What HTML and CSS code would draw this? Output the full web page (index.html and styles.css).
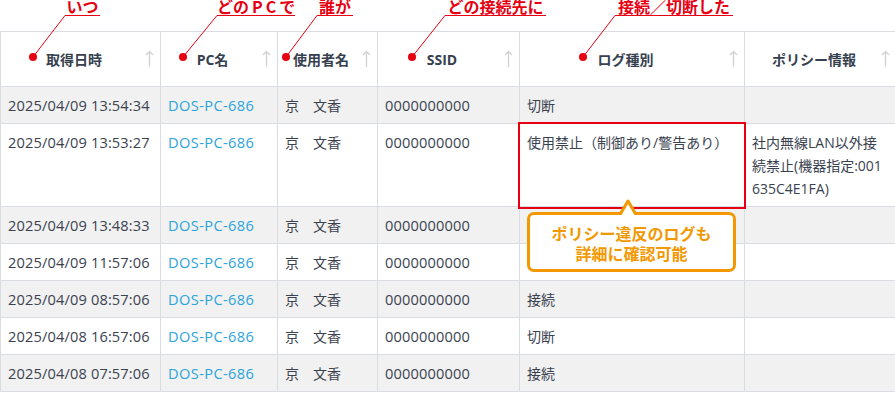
FILE: index.html
```html
<!DOCTYPE html>
<html lang="ja">
<head>
<meta charset="utf-8">
<title>ログ一覧</title>
<link rel="stylesheet" href="styles.css">
</head>
<body>
<div class="page">
  <table class="log">
    <colgroup>
      <col class="c1"><col class="c2"><col class="c3"><col class="c4"><col class="c5"><col class="c6">
    </colgroup>
    <thead>
      <tr>
        <th><div class="th-in"><span class="th-label">取得日時</span><svg class="sort" viewBox="0 0 9 18"><path d="M4.5 17V1.5M1 5L4.5 1.5 8 5"/></svg></div></th>
        <th><div class="th-in"><span class="th-label">PC名</span><svg class="sort" viewBox="0 0 9 18"><path d="M4.5 17V1.5M1 5L4.5 1.5 8 5"/></svg></div></th>
        <th><div class="th-in"><span class="th-label">使用者名</span><svg class="sort" viewBox="0 0 9 18"><path d="M4.5 17V1.5M1 5L4.5 1.5 8 5"/></svg></div></th>
        <th><div class="th-in"><span class="th-label">SSID</span><svg class="sort" viewBox="0 0 9 18"><path d="M4.5 17V1.5M1 5L4.5 1.5 8 5"/></svg></div></th>
        <th><div class="th-in"><span class="th-label">ログ種別</span><svg class="sort" viewBox="0 0 9 18"><path d="M4.5 17V1.5M1 5L4.5 1.5 8 5"/></svg></div></th>
        <th><div class="th-in"><span class="th-label">ポリシー情報</span><svg class="sort" viewBox="0 0 9 18"><path d="M4.5 17V1.5M1 5L4.5 1.5 8 5"/></svg></div></th>
      </tr>
    </thead>
    <tbody>
      <tr class="odd"><td class="en">2025/04/09 13:54:34</td><td class="en link">DOS-PC-686</td><td>京　文香</td><td class="en">0000000000</td><td>切断</td><td></td></tr>
      <tr><td class="en">2025/04/09 13:53:27</td><td class="en link">DOS-PC-686</td><td>京　文香</td><td class="en">0000000000</td><td>使用禁止（制御あり/警告あり）</td><td class="policy">社内無線LAN以外接続禁止(機器指定:001635C4E1FA)</td></tr>
      <tr class="odd"><td class="en">2025/04/09 13:48:33</td><td class="en link">DOS-PC-686</td><td>京　文香</td><td class="en">0000000000</td><td></td><td></td></tr>
      <tr><td class="en">2025/04/09 11:57:06</td><td class="en link">DOS-PC-686</td><td>京　文香</td><td class="en">0000000000</td><td></td><td></td></tr>
      <tr class="odd"><td class="en">2025/04/09 08:57:06</td><td class="en link">DOS-PC-686</td><td>京　文香</td><td class="en">0000000000</td><td>接続</td><td></td></tr>
      <tr><td class="en">2025/04/08 16:57:06</td><td class="en link">DOS-PC-686</td><td>京　文香</td><td class="en">0000000000</td><td>切断</td><td></td></tr>
      <tr class="odd"><td class="en">2025/04/08 07:57:06</td><td class="en link">DOS-PC-686</td><td>京　文香</td><td class="en">0000000000</td><td>接続</td><td></td></tr>
    </tbody>
  </table>

  <svg class="annot-lines" width="895" height="80" viewBox="0 0 895 80">
    <g class="ln">
      <path d="M65 15.5L33 57"/>
      <path d="M217 15.5L183 57"/>
      <path d="M317 15.5L286 57"/>
      <path d="M445 15.5L412 57"/>
      <path d="M615 15.5L583 57"/>
    </g>
    <g class="dot">
      <circle cx="33" cy="57" r="4"/>
      <circle cx="183" cy="57" r="4"/>
      <circle cx="286" cy="57" r="4"/>
      <circle cx="412" cy="57" r="4"/>
      <circle cx="583" cy="57" r="4"/>
    </g>
  </svg>
  <div class="label l1">いつ</div>
  <div class="label l2">どの<span class="pc">PC</span>で</div>
  <div class="label l3">誰が</div>
  <div class="label l4">どの接続先に</div>
  <div class="label l5">接続／切断した</div>

  <div class="highlight"></div>
  <div class="callout">ポリシー違反のログも<br>詳細に確認可能</div>
  <svg class="pointer" width="18" height="17" viewBox="0 0 18 17"><polygon points="2.5,17 9,5 15.5,17" fill="#fff"/><polyline points="1.6,15.6 9,3 16.4,15.6" fill="none"/></svg>
</div>
</body>
</html>
```

FILE: styles.css
```css
html, body {
  margin: 0;
  padding: 0;
  background: #fff;
}
body {
  font-family: "Open Sans", "Noto Sans CJK JP", sans-serif;
  color: #3a4250;
  overflow: hidden;
}
.page {
  position: relative;
  width: 895px;
  height: 395px;
  padding-top: 31px;
  box-sizing: border-box;
}
.log {
  border-collapse: collapse;
  table-layout: fixed;
  width: 896px;
}
.c1 { width: 160px; }
.c2 { width: 117px; }
.c3 { width: 100px; }
.c4 { width: 142px; }
.c5 { width: 225px; }
.c6 { width: 152px; }
.log th, .log td {
  border: 1px solid #d9dce1;
}
.log th {
  height: 54px;
  padding: 0;
  font-weight: bold;
  font-size: 14px;
  color: #36404e;
  font-family: "Open Sans", "Noto Sans CJK JP", sans-serif;
}
.th-in {
  display: flex;
  align-items: center;
  padding: 0 6px 0 2px;
}
.th-label {
  flex: 1;
  text-align: center;
  white-space: nowrap;
}
.sort {
  width: 9px;
  height: 18px;
  flex: none;
}
.sort path {
  fill: none;
  stroke: #cfd1d4;
  stroke-width: 1.3;
}
.log td {
  padding: 7px 8px 6px 7px;
  font-size: 14px;
  line-height: 23px;
  vertical-align: top;
  color: #3a4250;
  white-space: nowrap;
}
.log td.en {
  font-size: 14.6px;
  letter-spacing: 0.15px;
}
.log td.link {
  color: #2ba4dc;
  letter-spacing: 0.4px;
}
.log td.policy {
  white-space: normal;
  word-break: break-all;
  padding-right: 11px;
}
.log tr.odd td {
  background: #f1f1f1;
}

.annot-lines {
  position: absolute;
  left: 0;
  top: 0;
  pointer-events: none;
}
.annot-lines .ln path {
  stroke: #e60012;
  stroke-width: 1;
  fill: none;
}
.annot-lines .dot circle {
  fill: #e60012;
}
.label {
  position: absolute;
  top: -2px;
  height: 17px;
  line-height: 16px;
  border-bottom: 1px solid #e60012;
  text-align: center;
  font-family: "Noto Sans CJK JP", sans-serif;
  font-weight: bold;
  font-size: 16px;
  color: #e60012;
  white-space: nowrap;
}
.label .pc {
  letter-spacing: 3px;
  margin-left: 3px;
}
.l1 { left: 65px; width: 35px; }
.l2 { left: 217px; width: 78px; }
.l3 { left: 317px; width: 36px; }
.l4 { left: 445px; width: 101px; }
.l5 { left: 615px; width: 118px; }

.highlight {
  position: absolute;
  left: 518px;
  top: 122px;
  width: 228px;
  height: 87px;
  box-sizing: border-box;
  border: 2px solid #e60012;
}
.callout {
  position: absolute;
  left: 527px;
  top: 212px;
  width: 209px;
  height: 60px;
  box-sizing: border-box;
  border: 3px solid #f39800;
  border-radius: 7px;
  background: #fff;
  padding-top: 9px;
  text-align: center;
  font-family: "Noto Sans CJK JP", sans-serif;
  font-weight: bold;
  font-size: 16px;
  line-height: 19.5px;
  color: #f39800;
}
.pointer {
  position: absolute;
  left: 619px;
  top: 198px;
}
.pointer polyline {
  stroke: #f39800;
  stroke-width: 3;
  stroke-linejoin: round;
}
```
